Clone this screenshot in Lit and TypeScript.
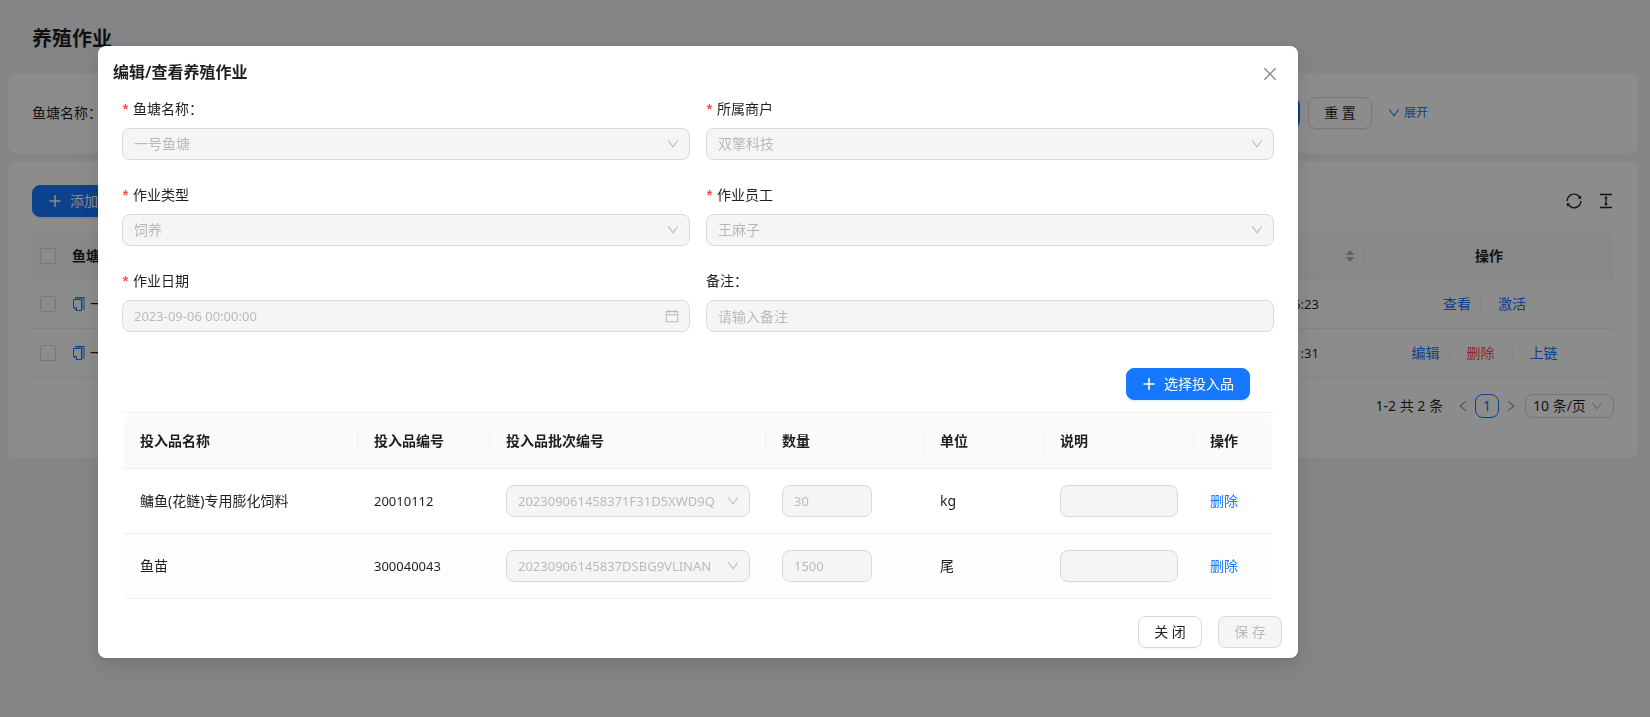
import { LitElement, html, css, svg } from "lit";
import { customElement } from "lit/decorators.js";

const ICONS = {
  down: "M884 256h-75c-5.1 0-9.9 2.5-12.9 6.6L512 654.2 227.9 262.6c-3-4.1-7.8-6.6-12.9-6.6h-75c-6.5 0-10.3 7.4-6.5 12.7l352.6 486.1c12.8 17.6 39 17.6 51.7 0l352.6-486.1c3.9-5.3.1-12.7-6.4-12.7z",
  left: "M724 218.3V141c0-6.7-7.7-10.4-12.9-6.3L260.3 486.8a31.86 31.86 0 000 50.3l450.8 352.1c5.3 4.1 12.9.4 12.9-6.3v-77.3c0-4.9-2.3-9.6-6.1-12.6l-360-281 360-281.1c3.8-3 6.1-7.7 6.1-12.6z",
  right: "M765.7 486.8L314.9 134.7A7.97 7.97 0 00302 141v77.3c0 4.9 2.3 9.6 6.1 12.6l360 281.1-360 281.1c-3.9 3-6.1 7.7-6.1 12.6V883c0 6.7 7.7 10.4 12.9 6.3l450.8-352.1a31.96 31.96 0 000-50.4z",
  close: "M224.2 166.2L166.2 224.2 454.1 512 166.2 799.8l58 58L512 569.9l287.8 287.9 58-58L569.9 512l287.9-287.8-58-58L512 454.1z",
  plus: "M460 144h104v316h300v104H564v316H460V564H160V460h300z",
  calendar: "M880 184H712v-64c0-4.4-3.6-8-8-8h-56c-4.4 0-8 3.6-8 8v64H384v-64c0-4.4-3.6-8-8-8h-56c-4.4 0-8 3.6-8 8v64H144c-17.7 0-32 14.3-32 32v664c0 17.7 14.3 32 32 32h736c17.7 0 32-14.3 32-32V216c0-17.7-14.3-32-32-32zm-40 656H184V460h656v380zM184 392V256h128v48c0 4.4 3.6 8 8 8h56c4.4 0 8-3.6 8-8v-48h256v48c0 4.4 3.6 8 8 8h56c4.4 0 8-3.6 8-8v-48h128v136H184z",
  sync: "M168 504.2c1-43.7 10-86.1 26.9-126 17.3-41 42.1-77.7 73.7-109.4S337 212.3 378 195c42.4-17.9 87.4-27 133.9-27s91.5 9.1 133.8 27A341.5 341.5 0 01755 268.8c9.9 9.9 19.2 20.4 27.8 31.4l-60.2 47a8 8 0 003 14.1l175.7 43c5 1.2 9.9-2.6 9.9-7.7l.8-180.9c0-6.7-7.7-10.5-12.9-6.3l-56.4 44.1C765.8 155.1 646.2 92 511.8 92 282.7 92 96.3 275.6 92 503.8a8 8 0 008 8.2h60c4.4 0 7.9-3.5 8-7.8zm756 7.8h-60c-4.4 0-7.9 3.5-8 7.8-1 43.7-10 86.1-26.9 126-17.3 41-42.1 77.8-73.7 109.4A342.45 342.45 0 01512.1 856a342.24 342.24 0 01-243.2-100.8c-9.9-9.9-19.2-20.4-27.8-31.4l60.2-47a8 8 0 00-3-14.1l-175.7-43c-5-1.2-9.9 2.6-9.9 7.7l-.7 181c0 6.7 7.7 10.5 12.9 6.3l56.4-44.1C258.2 868.9 377.8 932 512.2 932c229.2 0 415.5-183.7 419.8-411.8a8 8 0 00-8-8.2z",
  density: "M840 836H184c-4.4 0-8 3.6-8 8v60c0 4.4 3.6 8 8 8h656c4.4 0 8-3.6 8-8v-60c0-4.4-3.6-8-8-8zm0-724H184c-4.4 0-8 3.6-8 8v60c0 4.4 3.6 8 8 8h656c4.4 0 8-3.6 8-8v-60c0-4.4-3.6-8-8-8zM610.8 378c6 0 9.4-7 5.7-11.7L515.7 238.7a7.14 7.14 0 00-11.3 0L403.6 366.3a7.23 7.23 0 005.7 11.7H476v268h-62.8c-6 0-9.4 7-5.7 11.7l100.8 127.5c2.9 3.7 8.5 3.7 11.3 0l100.8-127.5c3.7-4.7.4-11.7-5.7-11.7H548V378h62.8z",
};

const icon = (name: keyof typeof ICONS, size: number) => html`<svg
  class="icon" width=${size} height=${size} viewBox="64 64 896 896" fill="currentColor" aria-hidden="true"
>${svg`<path d=${ICONS[name]}></path>`}</svg>`;

const copyIcon = html`<svg class="icon" width="14" height="14" viewBox="0 0 14 14" aria-hidden="true">
  <path d="M3 1H13V13H10V3H3Z" fill="#91c3ff" />
  <path d="M3 0.5H12.5" fill="none" stroke="#1677ff" />
  <path d="M1.5 2.5H9.5V13.5H4.5L1.5 10.5Z" fill="#fff" stroke="#1677ff" />
  <path d="M1.5 10.5H4.5V13.5" fill="none" stroke="#1677ff" />
</svg>`;

interface Field {
  id: string;
  label: string;
  required: boolean;
  kind: "select" | "date" | "text";
  value?: string;
  placeholder?: string;
}

const FIELDS: Field[] = [
  { id: "pond", label: "鱼塘名称：", required: true, kind: "select", value: "一号鱼塘" },
  { id: "merchant", label: "所属商户", required: true, kind: "select", value: "双擎科技" },
  { id: "type", label: "作业类型", required: true, kind: "select", value: "饲养" },
  { id: "worker", label: "作业员工", required: true, kind: "select", value: "王麻子" },
  { id: "date", label: "作业日期", required: true, kind: "date", value: "2023-09-06 00:00:00" },
  { id: "remark", label: "备注：", required: false, kind: "text", placeholder: "请输入备注" },
];

const SUPPLIES = [
  { name: "鳙鱼(花鲢)专用膨化饲料", code: "20010112", batch: "202309061458371F31D5XWD9Q", amount: "30", unit: "kg" },
  { name: "鱼苗", code: "300040043", batch: "20230906145837DSBG9VLINAN", amount: "1500", unit: "尾" },
];

const JOBS = [
  { pond: "一号鱼塘", time: "2023-09-06 14:56:23", actions: ["查看", "激活"] },
  { pond: "一号鱼塘", time: "2023-09-06 14:51:31", actions: ["编辑", "删除", "上链"] },
];

const shared = css`
  * { box-sizing: border-box; }
  .icon { display: block; flex: none; }
  button, input, select {
    font: inherit;
    color: inherit;
    margin: 0;
  }
  a { color: #1677ff; text-decoration: none; }
  .btn {
    display: inline-flex;
    align-items: center;
    justify-content: center;
    gap: 8px;
    height: 32px;
    min-width: 64px;
    padding: 0 15px;
    border: 1px solid #d9d9d9;
    border-radius: 8px;
    background: #fff;
    white-space: nowrap;
    box-shadow: 0 2px 0 rgba(0, 0, 0, 0.02);
  }
  .btn.primary {
    background: #1677ff;
    border-color: #1677ff;
    color: #fff;
    box-shadow: 0 2px 0 rgba(5, 145, 255, 0.1);
  }
  .btn:disabled {
    background: #f5f5f5;
    color: rgba(0, 0, 0, 0.25);
    box-shadow: none;
  }
  .num { font-size: 13px; }
  table {
    width: 100%;
    table-layout: fixed;
    border-collapse: separate;
    border-spacing: 0;
  }
  th, td {
    text-align: left;
    border-bottom: 1px solid #f0f0f0;
    white-space: nowrap;
  }
  th {
    background: #fafafa;
    font-weight: 600;
  }
  th:first-child { border-top-left-radius: 8px; }
  th:last-child { border-top-right-radius: 8px; }
`;

@customElement("job-list-page")
class JobListPage extends LitElement {
  static styles = [
    shared,
    css`
      :host { display: block; padding: 0 12px 0 8px; }
      h1 {
        margin: 0;
        padding: 23px 24px 18px;
        font-size: 20px;
        line-height: 32px;
        font-weight: 600;
      }
      .card {
        background: #fff;
        border-radius: 8px;
        padding: 24px;
        margin-bottom: 8px;
      }
      .search { display: flex; align-items: center; gap: 8px; }
      .search-input {
        flex: 1;
        min-width: 0;
        height: 32px;
        padding: 0 11px;
        border: 1px solid #d9d9d9;
        border-radius: 8px;
      }
      .search-end {
        display: flex;
        align-items: center;
        gap: 8px;
        width: 378px;
      }
      .expand {
        display: flex;
        align-items: center;
        gap: 4px;
        margin-left: 8px;
        font-size: 12px;
      }
      .toolbar {
        display: flex;
        align-items: center;
        justify-content: space-between;
        margin-bottom: 16px;
      }
      .tools { display: flex; gap: 16px; }
      .tool { border: 0; background: none; padding: 0; }
      th, td { padding: 0 8px; }
      th { height: 47px; }
      td { height: 49px; }
      .w-check { width: 32px; }
      .w-time { width: 176px; }
      .w-action { width: 250px; }
      .check {
        display: block;
        appearance: none;
        width: 16px;
        height: 16px;
        border: 1px solid #d9d9d9;
        border-radius: 2px;
        background: #fff;
      }
      .pond { display: flex; align-items: center; gap: 4px; }
      .head {
        display: flex;
        align-items: center;
        justify-content: flex-end;
        height: 22px;
        margin-right: -8px;
        padding-right: 8px;
        border-right: 1px solid #f0f0f0;
        color: rgba(0, 0, 0, 0.29);
      }
      th.center { text-align: center; }
      .actions { display: flex; align-items: center; justify-content: center; }
      .actions a { margin-right: 9px; }
      .actions a.danger { color: #ff4d4f; margin-right: 17px; }
      .sep { width: 1px; height: 13px; margin-right: 17px; background: #f0f0f0; }
      .pager {
        display: flex;
        align-items: center;
        justify-content: flex-end;
        margin: 16px 0;
      }
      .total { margin-right: 8px; }
      .page {
        display: flex;
        align-items: center;
        justify-content: center;
        width: 24px;
        height: 24px;
        padding: 0;
        border: 0;
        border-radius: 8px;
        background: none;
        color: rgba(0, 0, 0, 0.45);
      }
      .page.current { border: 1px solid #1677ff; color: #1677ff; }
      .size { display: grid; align-items: center; width: 89px; margin-left: 2px; }
      .size > * { grid-area: 1 / 1; }
      .size select {
        appearance: none;
        width: 100%;
        height: 24px;
        padding: 0 7px;
        border: 1px solid #d9d9d9;
        border-radius: 8px;
        background: #fff;
      }
      .size .icon { justify-self: end; margin-right: 11px; color: rgba(0, 0, 0, 0.25); }
    `,
  ];

  render() {
    return html`
      <h1>养殖作业</h1>
      <section class="card search">
        <label for="q">鱼塘名称：</label>
        <input class="search-input" id="q" />
        <div class="search-end">
          <button class="btn primary">查 询</button>
          <button class="btn">重 置</button>
          <a class="expand" href="#">${icon("down", 12)}展开</a>
        </div>
      </section>
      <section class="card">
        <div class="toolbar">
          <button class="btn primary">${icon("plus", 14)}添加</button>
          <div class="tools">
            <button class="tool" aria-label="刷新">${icon("sync", 16)}</button>
            <button class="tool" aria-label="密度">${icon("density", 16)}</button>
          </div>
        </div>
        <table>
          <colgroup>
            <col class="w-check" /><col /><col class="w-time" /><col class="w-action" />
          </colgroup>
          <thead>
            <tr>
              <th><input class="check" type="checkbox" aria-label="全选" /></th>
              <th>鱼塘名称</th>
              <th>
                <div class="head">
                  <svg class="icon" width="10" height="14" viewBox="0 0 10 14" fill="currentColor" aria-hidden="true">
                    <path d="M5 1L9.5 6H0.5ZM0.5 8H9.5L5 13Z" />
                  </svg>
                </div>
              </th>
              <th class="center">操作</th>
            </tr>
          </thead>
          <tbody>
            ${JOBS.map(
              (job) => html`<tr>
                <td><input class="check" type="checkbox" aria-label="选择" /></td>
                <td><div class="pond">${copyIcon}${job.pond}</div></td>
                <td class="num">${job.time}</td>
                <td>
                  <div class="actions">
                    ${job.actions.map(
                      (name, i) => html`${i ? html`<span class="sep"></span>` : ""}<a
                          class=${name === "删除" ? "danger" : ""} href="#">${name}</a>`
                    )}
                  </div>
                </td>
              </tr>`
            )}
          </tbody>
        </table>
        <div class="pager">
          <span class="total">1-2 共 2 条</span>
          <button class="page" aria-label="上一页">${icon("left", 12)}</button>
          <button class="page current">1</button>
          <button class="page" aria-label="下一页">${icon("right", 12)}</button>
          <div class="size">
            <select aria-label="每页条数"><option>10 条/页</option></select>
            ${icon("down", 12)}
          </div>
        </div>
      </section>
    `;
  }
}

@customElement("job-dialog")
class JobDialog extends LitElement {
  static styles = [
    shared,
    css`
      :host {
        display: block;
        width: 1200px;
        max-width: 100%;
        background: #fff;
        border-radius: 8px;
        box-shadow: 0 6px 16px 0 rgba(0, 0, 0, 0.08), 0 3px 6px -4px rgba(0, 0, 0, 0.12),
          0 9px 28px 8px rgba(0, 0, 0, 0.05);
      }
      .header {
        display: flex;
        align-items: center;
        justify-content: space-between;
        padding: 14px 20px 14px 15px;
      }
      h2 { margin: 0; font-size: 16px; line-height: 24px; font-weight: 600; }
      .close {
        padding: 4px 0 0;
        border: 0;
        background: none;
        color: rgba(0, 0, 0, 0.45);
      }
      .body { padding: 0 24px; }
      .form { display: grid; grid-template-columns: 1fr 1fr; gap: 24px 16px; }
      .field { display: grid; gap: 8px; min-width: 0; }
      .field label { display: flex; gap: 4px; line-height: 22px; }
      .mark {
        width: 7px;
        color: #ff4d4f;
        font-family: "Liberation Sans", sans-serif;
        font-weight: 700;
        text-align: center;
      }
      .control { display: grid; align-items: center; }
      .control > * { grid-area: 1 / 1; }
      .control .icon {
        justify-self: end;
        margin-right: 11px;
        color: rgba(0, 0, 0, 0.25);
      }
      .control input, .control select {
        appearance: none;
        width: 100%;
        min-width: 0;
        height: 32px;
        padding: 0 11px;
        border: 1px solid #d9d9d9;
        border-radius: 8px;
        background: #f5f5f5;
        color: rgba(0, 0, 0, 0.25);
        opacity: 1;
      }
      .control input::placeholder { color: rgba(0, 0, 0, 0.25); opacity: 1; }
      .amount { width: 90px; }
      .add {
        display: flex;
        justify-content: flex-end;
        padding: 36px 24px 12px;
        border-bottom: 1px solid #f0f0f0;
      }
      .table { padding: 1px 2px 0; }
      th, td { padding: 0 16px; }
      th { height: 55px; padding-right: 0; }
      td { height: 65px; }
      th span { display: block; line-height: 22px; border-right: 1px solid #f0f0f0; }
      th:last-child span { border: 0; }
      tbody tr:nth-child(2) td { background: #fdfdfd; }
      .c1 { width: 234px; }
      .c2 { width: 132px; }
      .c3 { width: 276px; }
      .c4 { width: 158px; }
      .c5 { width: 120px; }
      .c6 { width: 150px; }
      .c7 { width: 78px; }
      .footer {
        display: flex;
        justify-content: flex-end;
        gap: 16px;
        padding: 17px 16px 10px;
      }
    `,
  ];

  private control(f: Field) {
    if (f.kind === "select") {
      return html`<select id=${f.id} disabled><option>${f.value}</option></select>${icon("down", 12)}`;
    }
    if (f.kind === "date") {
      return html`<input class="num" id=${f.id} .value=${f.value ?? ""} disabled />${icon("calendar", 14)}`;
    }
    return html`<input id=${f.id} placeholder=${f.placeholder ?? ""} disabled />`;
  }

  render() {
    return html`
      <div class="header">
        <h2>编辑/查看养殖作业</h2>
        <button class="close" aria-label="关闭">${icon("close", 16)}</button>
      </div>
      <div class="body">
        <div class="form">
          ${FIELDS.map(
            (f) => html`<div class="field">
              <label for=${f.id}>${f.required ? html`<span class="mark">*</span>` : ""}${f.label}</label>
              <div class="control">${this.control(f)}</div>
            </div>`
          )}
        </div>
        <div class="add"><button class="btn primary">${icon("plus", 14)}选择投入品</button></div>
        <div class="table">
          <table>
            <colgroup>
              <col class="c1" /><col class="c2" /><col class="c3" /><col class="c4" />
              <col class="c5" /><col class="c6" /><col class="c7" />
            </colgroup>
            <thead>
              <tr>
                ${["投入品名称", "投入品编号", "投入品批次编号", "数量", "单位", "说明", "操作"].map(
                  (t) => html`<th><span>${t}</span></th>`
                )}
              </tr>
            </thead>
            <tbody>
              ${SUPPLIES.map(
                (s) => html`<tr>
                  <td>${s.name}</td>
                  <td class="num">${s.code}</td>
                  <td>
                    <div class="control">
                      <select class="num" aria-label="投入品批次编号" disabled><option>${s.batch}</option></select>
                      ${icon("down", 12)}
                    </div>
                  </td>
                  <td>
                    <div class="control amount">
                      <input class="num" aria-label="数量" .value=${s.amount} disabled />
                    </div>
                  </td>
                  <td>${s.unit}</td>
                  <td><div class="control"><input aria-label="说明" disabled /></div></td>
                  <td><a href="#">删除</a></td>
                </tr>`
              )}
            </tbody>
          </table>
        </div>
      </div>
      <div class="footer">
        <button class="btn">关 闭</button>
        <button class="btn" disabled>保 存</button>
      </div>
    `;
  }
}

@customElement("app-root")
class AppRoot extends LitElement {
  static styles = css`
    :host {
      display: block;
      min-height: 100vh;
      background: #f0f2f5;
      color: rgba(0, 0, 0, 0.88);
      font-family: "Noto Sans", "Noto Sans CJK SC", sans-serif;
      font-size: 14px;
      line-height: 22px;
    }
    .mask {
      position: fixed;
      inset: 0;
      display: flex;
      align-items: flex-start;
      justify-content: center;
      padding: 46px 254px 0 0;
      overflow: auto;
      background: rgba(0, 0, 0, 0.45);
    }
  `;

  render() {
    return html`
      <job-list-page></job-list-page>
      <div class="mask"><job-dialog role="dialog" aria-modal="true" aria-label="编辑/查看养殖作业"></job-dialog></div>
    `;
  }
}
